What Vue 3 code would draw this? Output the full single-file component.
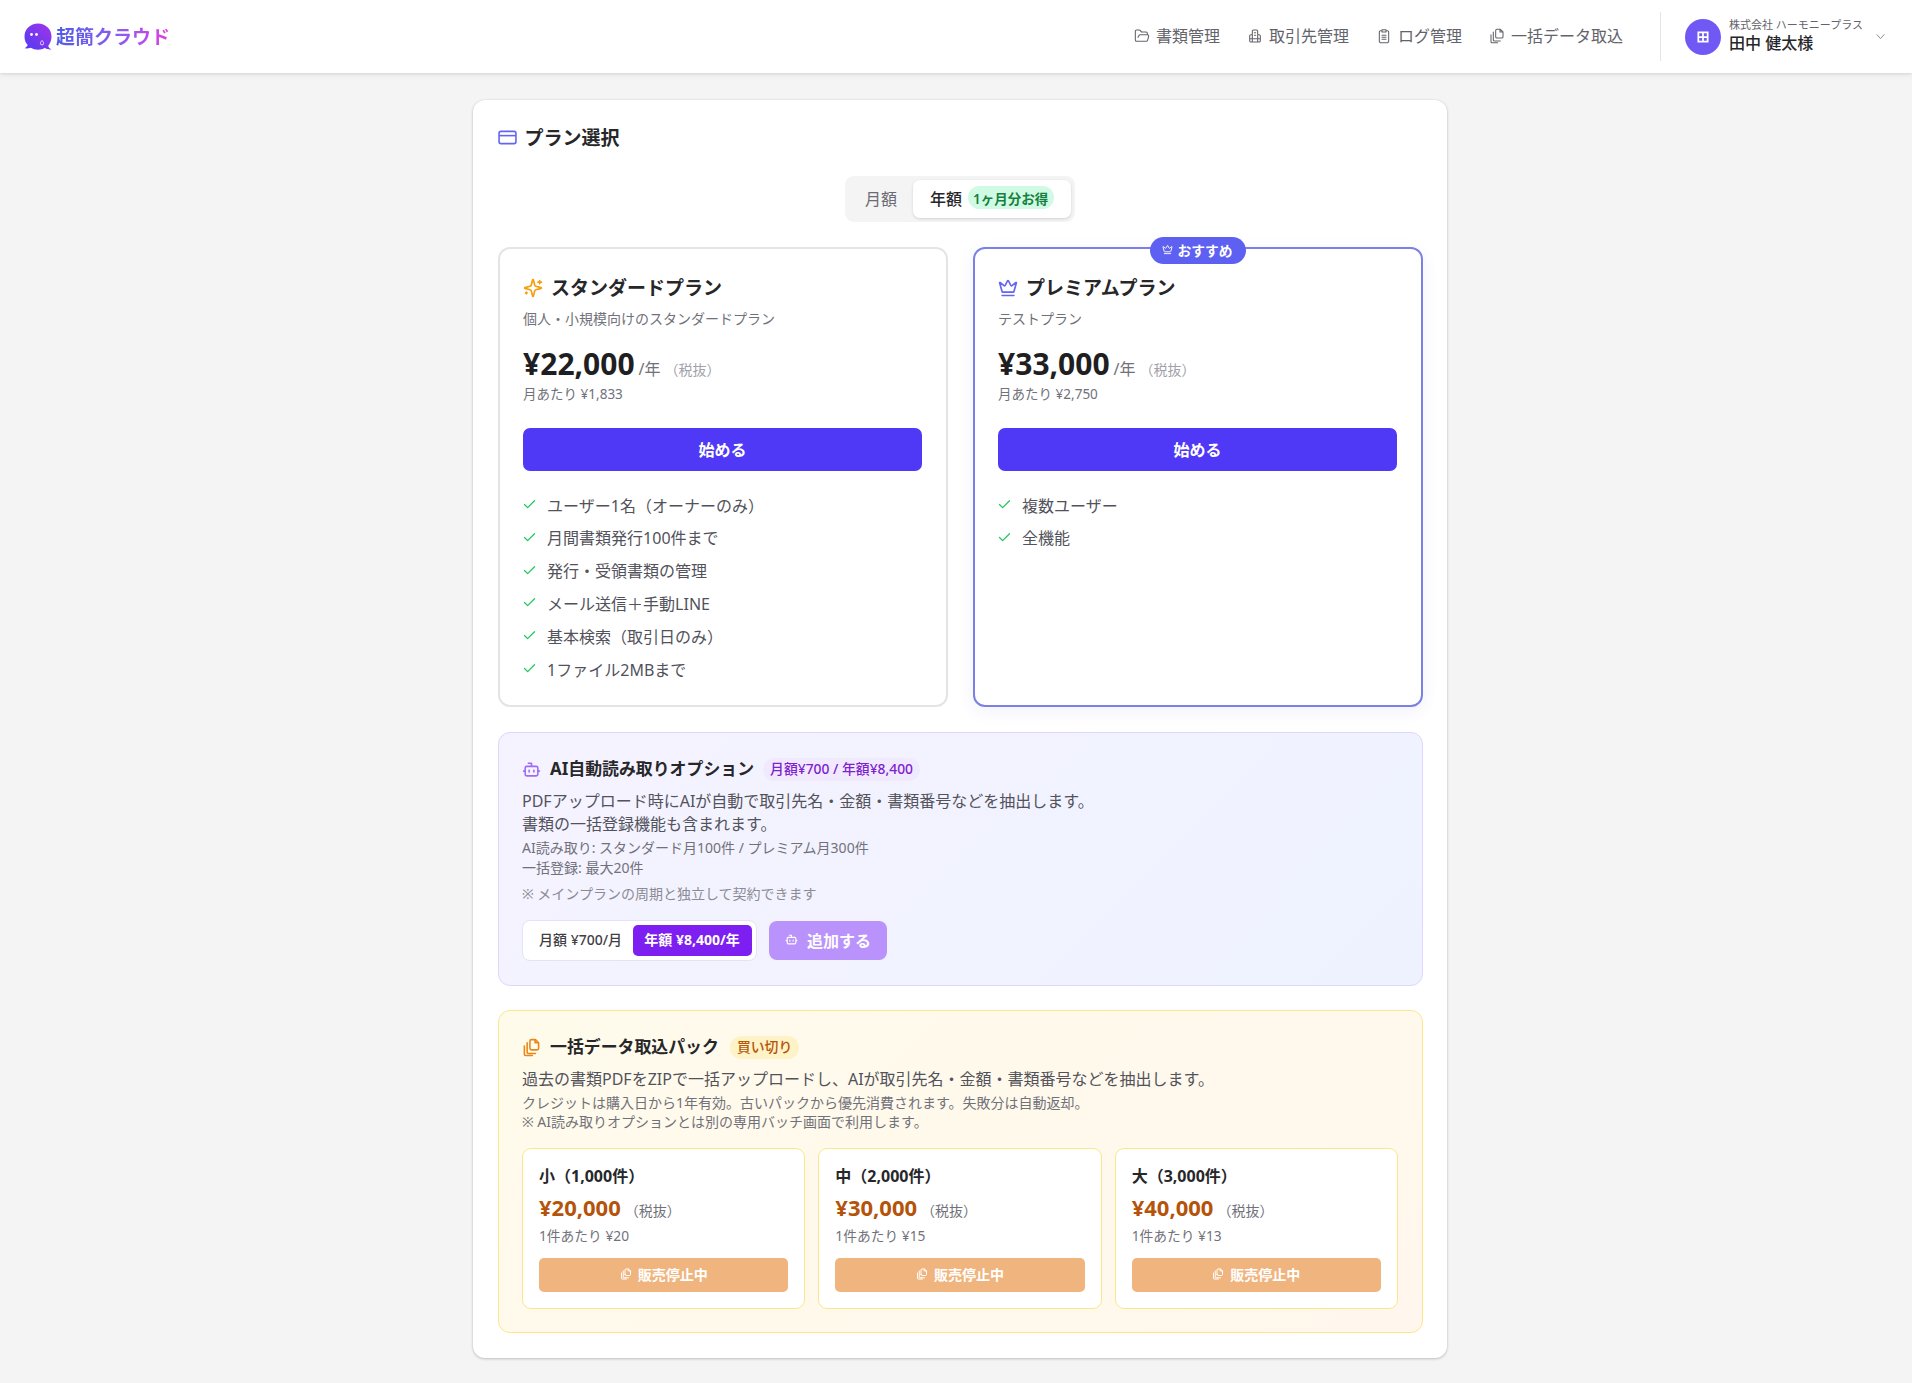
<script setup>
const iconFolder = 'm6 14 1.5-2.9A2 2 0 0 1 9.24 10H20a2 2 0 0 1 1.94 2.5l-1.54 6a2 2 0 0 1-1.95 1.5H4a2 2 0 0 1-2-2V5a2 2 0 0 1 2-2h3.9a2 2 0 0 1 1.69.9l.81 1.2a2 2 0 0 0 1.67.9H18a2 2 0 0 1 2 2v2'
const iconBuilding = 'M8 21V5a2 2 0 0 1 2-2h4a2 2 0 0 1 2 2v16M8 10H6a2 2 0 0 0-2 2v7a2 2 0 0 0 2 2h12a2 2 0 0 0 2-2v-7a2 2 0 0 0-2-2h-2M11 7h2M11 11h2M4 16h16'
const iconClip = 'M9 4H7a2 2 0 0 0-2 2v14a2 2 0 0 0 2 2h10a2 2 0 0 0 2-2V6a2 2 0 0 0-2-2h-2M9 2.5h6v3.5H9zM9 11h6M9 14h6M9 17h6'
const iconFiles = 'M10 13V4a2 2 0 0 1 2-2h5l4 4v7a2 2 0 0 1-2 2h-7a2 2 0 0 1-2-2ZM16.5 2v4H21M6.5 6v12a1.5 1.5 0 0 0 1.5 1.5h9M3 10v10.5A1.5 1.5 0 0 0 4.5 22H13'
const iconCrown = 'M11.56 3.27a.5.5 0 0 1 .88 0l2.95 5.61a1 1 0 0 0 1.52.29l4.27-3.66a.5.5 0 0 1 .8.52l-2.83 10.25a1 1 0 0 1-.96.72H5.82a1 1 0 0 1-.96-.72L2.02 6.03a.5.5 0 0 1 .8-.52l4.27 3.66a1 1 0 0 0 1.52-.29zM5 21h14'
const iconBot = 'M12 8V4H8M6 8h12a2 2 0 0 1 2 2v8a2 2 0 0 1-2 2H6a2 2 0 0 1-2-2v-8a2 2 0 0 1 2-2ZM2 14h2M20 14h2M15 13v2M9 13v2'
const iconSpark = 'M9.937 15.5A2 2 0 0 0 8.5 14.063l-6.135-1.582a.5.5 0 0 1 0-.962L8.5 9.936A2 2 0 0 0 9.937 8.5l1.582-6.135a.5.5 0 0 1 .963 0L14.063 8.5A2 2 0 0 0 15.5 9.937l6.135 1.581a.5.5 0 0 1 0 .964L15.5 14.063a2 2 0 0 0-1.437 1.437l-1.582 6.135a.5.5 0 0 1-.963 0zM20 3v4M22 5h-4M4 17v2M5 18H3'

const nav = [
  { label: '書類管理', d: iconFolder },
  { label: '取引先管理', d: iconBuilding },
  { label: 'ログ管理', d: iconClip },
  { label: '一括データ取込', d: iconFiles }
]

const standardFeatures = [
  'ユーザー1名（オーナーのみ）',
  '月間書類発行100件まで',
  '発行・受領書類の管理',
  'メール送信＋手動LINE',
  '基本検索（取引日のみ）',
  '1ファイル2MBまで'
]
const plans = [
  { key: 'standard', name: 'スタンダードプラン', desc: '個人・小規模向けのスタンダードプラン', price: '¥22,000', monthly: '月あたり ¥1,833', features: standardFeatures },
  { key: 'premium', name: 'プレミアムプラン', desc: 'テストプラン', price: '¥33,000', monthly: '月あたり ¥2,750', features: ['複数ユーザー', '全機能'] }
]
const packs = [
  { name: '小（1,000件）', price: '¥20,000', unit: '1件あたり ¥20' },
  { name: '中（2,000件）', price: '¥30,000', unit: '1件あたり ¥15' },
  { name: '大（3,000件）', price: '¥40,000', unit: '1件あたり ¥13' }
]
</script>

<template>
  <div class="page">
    <header class="topbar">
      <div class="brand">
        <svg class="logo" viewBox="0 0 28 28">
          <defs>
            <linearGradient id="logoGrad" x1="0" y1="1" x2="1" y2="0">
              <stop offset="0" stop-color="#4f3cf5" />
              <stop offset="1" stop-color="#a534e8" />
            </linearGradient>
          </defs>
          <path d="M14 0.5C21.5 0.5 27.5 6 27.5 13.5c0 3.6-1.2 6.8-3.2 9.2.3 1.6 1.5 3 3.2 3.8-2.6.3-5-.3-6.8-1.4-2 1.1-4.2 1.6-6.7 1.6-2.6 0-5.2-.7-7.2-2-1.6.6-4 1-6.4.6 1.6-.8 2.8-2 3.3-3.3C1.6 19.8.5 16.8.5 13.5.5 6 6.5.5 14 .5Z" fill="url(#logoGrad)" />
          <circle cx="7.5" cy="11.5" r="1.4" fill="#fff" />
          <circle cx="12.5" cy="11.5" r="1.4" fill="#fff" />
          <path d="M18 17.5c1 1.3 1.6 2 1.6 2.8a1.6 1.6 0 0 1-3.2 0c0-.8.6-1.5 1.6-2.8Z" fill="none" stroke="#fff" stroke-width=".8" />
        </svg>
        <span class="brand-name">超簡クラウド</span>
      </div>
      <nav class="nav">
        <a v-for="item in nav" :key="item.label" class="nav-item">
          <svg class="nav-icon" viewBox="0 0 24 24"><path :d="item.d" /></svg>
          <span>{{ item.label }}</span>
        </a>
      </nav>
      <div class="user">
        <div class="avatar">
          <svg class="avatar-icon" viewBox="0 0 24 24"><path d="M4 4h16v16H4zM12 4v16M4 12h16" /></svg>
        </div>
        <div class="user-text">
          <div class="company">株式会社 ハーモニープラス</div>
          <div class="username">田中 健太様</div>
        </div>
        <svg class="chevron" viewBox="0 0 24 24"><path d="m5 8 7 8 7-8" /></svg>
      </div>
    </header>

    <main class="main">
      <section class="panel">
        <h1 class="panel-title">
          <svg class="title-icon" viewBox="0 0 20 16"><rect x="1" y="1.5" width="18" height="13" rx="2" /><path d="M1 6h18" /></svg>
          プラン選択
        </h1>

        <div class="cycle-wrap">
          <div class="cycle">
            <div class="cycle-tab">月額</div>
            <div class="cycle-tab active">
              年額
              <span class="save">1ヶ月分お得</span>
            </div>
          </div>
        </div>

        <div class="plans">
          <article v-for="plan in plans" :key="plan.key" class="plan" :class="plan.key">
            <div v-if="plan.key === 'premium'" class="recommend">
              <svg class="recommend-icon" viewBox="0 0 24 24"><path :d="iconCrown" /></svg>
              おすすめ
            </div>
            <h2 class="plan-name">
              <svg v-if="plan.key === 'standard'" class="plan-icon spark" viewBox="0 0 24 24"><path :d="iconSpark" /></svg>
              <svg v-else class="plan-icon crown" viewBox="0 0 24 24"><path :d="iconCrown" /></svg>
              {{ plan.name }}
            </h2>
            <p class="plan-desc">{{ plan.desc }}</p>
            <div class="price-row">
              <span class="price">{{ plan.price }}</span>
              <span class="per">/年</span>
              <span class="tax">（税抜）</span>
            </div>
            <div class="monthly">{{ plan.monthly }}</div>
            <button class="start">始める</button>
            <ul class="features">
              <li v-for="feature in plan.features" :key="feature">
                <svg class="check" viewBox="0 0 24 24"><path d="M20 6 9 17l-5-5" /></svg>
                {{ feature }}
              </li>
            </ul>
          </article>
        </div>

        <section class="addon">
          <div class="head-row">
            <svg class="head-icon bot" viewBox="0 0 24 24"><path :d="iconBot" /></svg>
            <h3 class="head-title">AI自動読み取りオプション</h3>
            <span class="tag tag-purple">月額¥700 / 年額¥8,400</span>
          </div>
          <p class="body-text addon-desc">PDFアップロード時にAIが自動で取引先名・金額・書類番号などを抽出します。<br />書類の一括登録機能も含まれます。</p>
          <p class="small-text addon-detail">AI読み取り: スタンダード月100件 / プレミアム月300件<br />一括登録: 最大20件</p>
          <p class="small-text addon-note">※ メインプランの周期と独立して契約できます</p>
          <div class="addon-actions">
            <div class="addon-toggle">
              <span class="addon-opt">月額 ¥700/月</span>
              <span class="addon-opt on">年額 ¥8,400/年</span>
            </div>
            <button class="add">
              <svg class="add-icon" viewBox="0 0 24 24"><path :d="iconBot" /></svg>
              追加する
            </button>
          </div>
        </section>

        <section class="bulk">
          <div class="head-row bulk-head">
            <svg class="head-icon files" viewBox="0 0 24 24"><path :d="iconFiles" /></svg>
            <h3 class="head-title">一括データ取込パック</h3>
            <span class="tag tag-amber">買い切り</span>
          </div>
          <p class="body-text bulk-desc">過去の書類PDFをZIPで一括アップロードし、AIが取引先名・金額・書類番号などを抽出します。</p>
          <p class="small-text bulk-note">クレジットは購入日から1年有効。古いパックから優先消費されます。失敗分は自動返却。<br />※ AI読み取りオプションとは別の専用バッチ画面で利用します。</p>
          <div class="packs">
            <div v-for="pack in packs" :key="pack.name" class="pack">
              <div class="pack-name">{{ pack.name }}</div>
              <div class="pack-price-row">
                <span class="pack-price">{{ pack.price }}</span>
                <span class="pack-tax">（税抜）</span>
              </div>
              <div class="pack-unit">{{ pack.unit }}</div>
              <button class="pack-btn">
                <svg class="pack-icon" viewBox="0 0 24 24"><path :d="iconFiles" /></svg>
                販売停止中
              </button>
            </div>
          </div>
        </section>
      </section>
    </main>
  </div>
</template>

<style>
body {
  margin: 0;
  background: #f4f4f5;
}
</style>

<style scoped>
* {
  box-sizing: border-box;
}
.page {
  min-height: 1383px;
  background: #f4f4f5;
  font-family: "Noto Sans", "Noto Sans CJK JP", sans-serif;
  color: #27272a;
}
h1, h2, h3, p, ul {
  margin: 0;
  padding: 0;
}
button {
  border: 0;
  font-family: inherit;
  cursor: pointer;
}
.topbar {
  height: 73px;
  background: #fff;
  display: flex;
  align-items: center;
  padding: 0 25px 0 24px;
  box-shadow: 0 1px 3px rgba(0, 0, 0, 0.1), 0 2px 8px rgba(0, 0, 0, 0.05);
  position: relative;
}
.brand {
  display: flex;
  align-items: center;
  gap: 4px;
}
.logo {
  width: 28px;
  height: 28px;
  display: block;
}
.brand-name {
  font-size: 19px;
  font-weight: 700;
  line-height: 28px;
  background: linear-gradient(90deg, #4f5ce8, #8b5cf0 55%, #e03fe0);
  -webkit-background-clip: text;
  background-clip: text;
  color: transparent;
}
.nav {
  margin-left: auto;
  display: flex;
  align-items: center;
  gap: 27px;
}
.nav-item {
  display: flex;
  align-items: center;
  gap: 6px;
  font-size: 16px;
  line-height: 24px;
  color: #63636b;
  padding-bottom: 1px;
}
.nav-icon {
  width: 16px;
  height: 16px;
  fill: none;
  stroke: #63636b;
  stroke-width: 1.6;
  stroke-linecap: round;
  stroke-linejoin: round;
}
.user {
  margin-left: 37px;
  height: 49px;
  border-left: 1px solid #e4e4e7;
  padding-left: 24px;
  display: flex;
  align-items: center;
}
.avatar {
  width: 36px;
  height: 36px;
  border-radius: 50%;
  background: #7058f5;
  display: flex;
  align-items: center;
  justify-content: center;
  margin-right: 8px;
}
.avatar-icon {
  width: 14px;
  height: 14px;
  fill: none;
  stroke: #fff;
  stroke-width: 3;
}
.user-text {
  width: 145px;
  padding-bottom: 3.4px;
}
.company {
  font-size: 11px;
  line-height: 16px;
  color: #63636b;
}
.username {
  font-size: 16px;
  line-height: 20px;
  font-weight: 500;
  color: #27272a;
}
.chevron {
  width: 13px;
  height: 13px;
  fill: none;
  stroke: #8a8a92;
  stroke-width: 1.8;
  margin-top: -1px;
}
.main {
  padding: 26.6px 0 25px 473px;
}
.panel {
  width: 974px;
  background: #fff;
  border-radius: 12px;
  box-shadow: 0 1px 3px rgba(0, 0, 0, 0.2), 0 0 2px rgba(0, 0, 0, 0.1);
  padding: 24px 24.5px 25px;
}
.panel-title {
  display: flex;
  align-items: center;
  gap: 8px;
  font-size: 19px;
  line-height: 28px;
  font-weight: 700;
  color: #27272a;
}
.title-icon {
  width: 19px;
  height: 15px;
  fill: none;
  stroke: #6366f1;
  stroke-width: 1.7;
}
.cycle-wrap {
  display: flex;
  justify-content: center;
  margin-top: 24px;
}
.cycle {
  height: 46px;
  background: #f4f4f5;
  border-radius: 9px;
  padding: 4px;
  display: flex;
  width: 230px;
}
.cycle-tab {
  display: flex;
  align-items: center;
  font-size: 16px;
  color: #6b6b73;
  padding: 0 16px 1.5px;
  width: 64px;
  white-space: nowrap;
}
.cycle-tab.active {
  width: 158px;
  padding: 0 0 1.5px 17px;
  background: #fff;
  color: #27272a;
  font-weight: 500;
  border-radius: 7px;
  box-shadow: 0 1px 3px rgba(0, 0, 0, 0.14);
}
.save {
  margin-left: 5.5px;
  height: 23px;
  border-radius: 12px;
  background: #d1fae5;
  color: #15803d;
  font-size: 13.5px;
  font-weight: 600;
  padding: 0 5.5px;
  display: flex;
  align-items: center;
}
.plans {
  display: grid;
  grid-template-columns: 1fr 1fr;
  gap: 25px;
  margin-top: 25.2px;
}
.plan {
  position: relative;
  height: 460.4px;
  border: 2px solid #e4e4e7;
  border-radius: 12px;
  padding: 25.7px 23.6px 23.6px;
  background: #fff;
}
.plan.premium {
  border-color: #7a80e4;
  box-shadow: 0 4px 16px rgba(79, 70, 229, 0.08);
}
.recommend {
  position: absolute;
  top: -12px;
  left: 50%;
  transform: translateX(-50%);
  height: 27px;
  width: 96px;
  padding-bottom: 1px;
  border-radius: 14px;
  background: #5e60f2;
  color: #fff;
  font-size: 13.75px;
  font-weight: 700;
  display: flex;
  align-items: center;
  justify-content: center;
  gap: 4px;
  white-space: nowrap;
}
.recommend-icon {
  width: 11px;
  height: 11px;
  fill: none;
  stroke: #fff;
  stroke-width: 2;
  stroke-linecap: round;
  stroke-linejoin: round;
}
.plan-name {
  display: flex;
  align-items: center;
  gap: 8px;
  font-size: 19px;
  line-height: 28px;
  font-weight: 700;
  color: #27272a;
}
.plan-icon {
  width: 20px;
  height: 20px;
  fill: none;
  stroke-width: 2;
  stroke-linecap: round;
  stroke-linejoin: round;
}
.spark {
  stroke: #f59e0b;
}
.crown {
  stroke: #6366f1;
}
.plan-desc {
  margin-top: 7px;
  font-size: 14px;
  line-height: 20px;
  color: #71717a;
}
.price-row {
  margin-top: 14.3px;
  height: 40px;
  display: flex;
  align-items: baseline;
  line-height: 40px;
}
.price {
  font-size: 30px;
  font-weight: 700;
  color: #1f1f23;
}
.per {
  font-size: 16px;
  color: #71717a;
  margin-left: 4px;
}
.tax {
  font-size: 14px;
  color: #a1a1aa;
  margin-left: 4px;
}
.monthly {
  margin-top: 0;
  font-size: 13.5px;
  line-height: 20px;
  color: #71717a;
}
.start {
  display: block;
  width: 100%;
  height: 42.6px;
  margin-top: 24.5px;
  padding-bottom: 2px;
  border-radius: 7px;
  background: #4f39f6;
  color: #fff;
  font-size: 16px;
  font-weight: 700;
}
.features {
  list-style: none;
  margin-top: 23.7px;
  display: flex;
  flex-direction: column;
  gap: 10.8px;
}
.features li {
  display: flex;
  align-items: center;
  gap: 10px;
  font-size: 16px;
  line-height: 22px;
  color: #52525b;
}
.check {
  width: 15px;
  height: 15px;
  margin: -2px 0 0 -1px;
  fill: none;
  stroke: #22c55e;
  stroke-width: 2;
  stroke-linecap: round;
  stroke-linejoin: round;
}
.addon {
  margin-top: 25px;
  height: 253.4px;
  border: 1px solid #ddd6fe;
  border-radius: 12px;
  padding: 24px 23.5px;
  background: linear-gradient(135deg, #f5f3ff, #eef2ff);
}
.head-row {
  display: flex;
  align-items: center;
  height: 24px;
}
.head-icon {
  width: 19px;
  height: 19px;
  fill: none;
  stroke-width: 2;
  stroke-linecap: round;
  stroke-linejoin: round;
}
.bot {
  stroke: #9d6bf5;
}
.files {
  stroke: #e8881a;
}
.head-title {
  margin-left: 9px;
  font-size: 16.9px;
  line-height: 24px;
  font-weight: 700;
  color: #27272a;
}
.tag {
  height: 23px;
  border-radius: 12px;
  padding: 0 7px 1.5px;
  font-size: 13.85px;
  font-weight: 500;
  display: flex;
  align-items: center;
}
.tag-purple {
  margin-left: 9px;
  background: #f1eaff;
  color: #7e22ce;
}
.tag-amber {
  margin-left: 11px;
  background: #fef3c7;
  color: #b45309;
}
.body-text {
  font-size: 16px;
  line-height: 23.4px;
  color: #52525b;
}
.addon-desc {
  margin-top: 8.5px;
}
.small-text {
  font-size: 14px;
  line-height: 19.4px;
  color: #71717a;
}
.addon-detail {
  margin-top: 2px;
}
.addon-note {
  margin-top: 7px;
  color: #8b8b94;
}
.addon-actions {
  display: flex;
  align-items: center;
  gap: 12px;
  margin-top: 16.6px;
}
.addon-toggle {
  height: 40.4px;
  width: 234.6px;
  background: #fff;
  border: 1px solid #e6e2f6;
  border-radius: 8px;
  padding: 3.7px 4px;
  display: flex;
  align-items: stretch;
  justify-content: space-between;
}
.addon-opt {
  display: flex;
  align-items: center;
  padding: 0 0 2px 12px;
  font-size: 14px;
  font-weight: 500;
  color: #3f3f46;
  white-space: nowrap;
}
.addon-opt.on {
  width: 119px;
  padding: 0 0 2px;
  justify-content: center;
  background: #7c1ff0;
  color: #fff;
  font-weight: 700;
  border-radius: 5px;
}
.add {
  width: 118.6px;
  height: 39px;
  padding-bottom: 2px;
  border-radius: 8px;
  background: #b992fb;
  color: #fff;
  font-size: 16px;
  font-weight: 700;
  display: flex;
  align-items: center;
  justify-content: center;
  gap: 9px;
}
.add-icon {
  width: 13px;
  height: 13px;
  fill: none;
  stroke: #fff;
  stroke-width: 2;
  stroke-linecap: round;
  stroke-linejoin: round;
}
.bulk {
  margin-top: 24.3px;
  height: 323.3px;
  border: 1px solid #fde68a;
  border-radius: 12px;
  padding: 25px 23.5px 24px;
  background: linear-gradient(135deg, #fffbeb, #fff7ed);
}
.bulk-head {
  height: 22.3px;
}
.bulk-desc {
  margin-top: 9.7px;
}
.bulk-note {
  margin-top: 2.9px;
  line-height: 18.7px;
}
.packs {
  display: grid;
  grid-template-columns: repeat(3, 1fr);
  gap: 13px;
  margin-top: 16.6px;
}
.pack {
  height: 160.6px;
  background: #fff;
  border: 1px solid #fde68a;
  border-radius: 9px;
  padding: 15.7px 16px;
}
.pack-name {
  font-size: 16px;
  line-height: 22px;
  font-weight: 700;
  color: #27272a;
}
.pack-price-row {
  margin-top: 5px;
  height: 30px;
  display: flex;
  align-items: baseline;
  line-height: 30px;
}
.pack-price {
  font-size: 22px;
  font-weight: 700;
  color: #b45309;
}
.pack-tax {
  font-size: 14px;
  color: #71717a;
  margin-left: 4px;
}
.pack-unit {
  margin-top: 4px;
  font-size: 13.75px;
  line-height: 20px;
  color: #71717a;
}
.pack-btn {
  width: 100%;
  height: 34.3px;
  margin-top: 11.7px;
  padding-bottom: 2px;
  border-radius: 5px;
  background: #f0b57f;
  color: #fff;
  font-size: 14px;
  font-weight: 700;
  display: flex;
  align-items: center;
  justify-content: center;
  gap: 6px;
}
.pack-icon {
  width: 12px;
  height: 12px;
  fill: none;
  stroke: #fff;
  stroke-width: 2;
  stroke-linecap: round;
  stroke-linejoin: round;
}
</style>
